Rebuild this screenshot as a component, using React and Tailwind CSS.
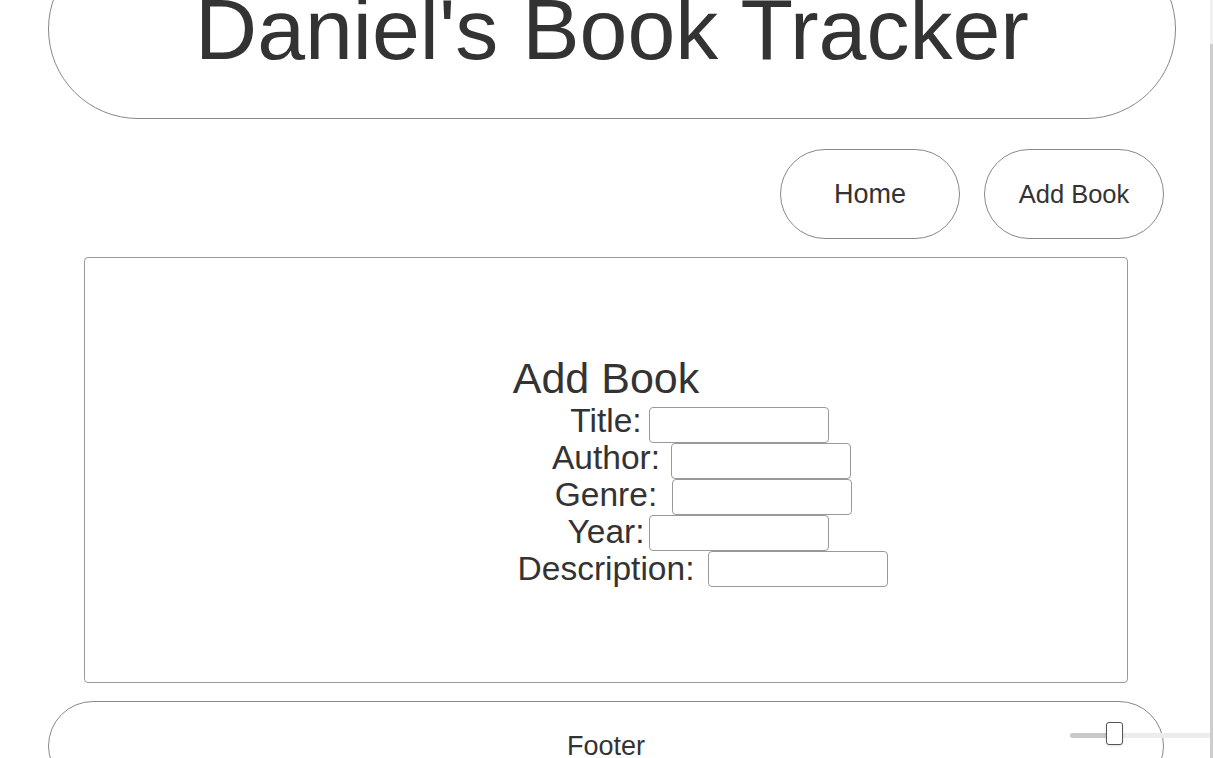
import React from "react";

export default function App() {
  const fields = [
    { label: "Title:", gap: "ml-[7px]", shift: "mt-[1px]" },
    { label: "Author:", gap: "ml-[11px]", shift: "mt-[2px]" },
    { label: "Genre:", gap: "ml-[15px]", shift: "mt-[3px]" },
    { label: "Year:", gap: "ml-[4px]", shift: "mt-[4px]" },
    { label: "Description:", gap: "ml-[14px]", shift: "mt-[5px]" },
  ];

  return (
    <div className="relative w-full h-[758px] overflow-hidden bg-white text-[#333] font-['Liberation_Sans',Arial,sans-serif]">
      {/* Header */}
      <header className="mt-[-61px] ml-[48px] w-[1128px] h-[180px] rounded-full border border-[#888] flex items-center justify-center">
        <h1 className="text-[86px] leading-none">Daniel's Book Tracker</h1>
      </header>

      {/* Nav */}
      <nav className="mt-[30px] w-[1164px] flex justify-end gap-[24px]">
        <button className="w-[180px] h-[90px] rounded-full border border-[#888] text-[27px] bg-white">
          Home
        </button>
        <button className="w-[180px] h-[90px] rounded-full border border-[#888] text-[25.5px] bg-white">
          Add Book
        </button>
      </nav>

      {/* Main */}
      <main className="mt-[18px] ml-[84px] w-[1044px] h-[426px] rounded border border-[#999] flex flex-col items-center justify-center">
        <h2 className="text-[43px] leading-[46px] mt-[2px] mb-[6px]">Add Book</h2>
        <form className="w-full">
          {fields.map((f) => (
            <div key={f.label} className="grid grid-cols-[1fr_auto_1fr] items-start h-[36px]">
              <div></div>
              <label className={`${f.shift} text-[33.5px] leading-[25px]`}>{f.label}</label>
              <div className="flex">
                <input
                  type="text"
                  className={`${f.gap} w-[180px] h-[36px] rounded border border-[#999] bg-white`}
                />
              </div>
            </div>
          ))}
        </form>
      </main>

      {/* Footer */}
      <footer className="mt-[18px] ml-[48px] w-[1116px] h-[90px] rounded-full border border-[#888] flex items-center justify-center">
        <span className="text-[27px]">Footer</span>
      </footer>

      {/* Slider overlay */}
      <div className="absolute left-[1070px] top-[733px] w-[143px] h-[5px] flex">
        <div className="w-[40px] h-full bg-[#c8c8c8] rounded-l-full"></div>
        <div className="flex-1 h-full bg-[#ececec]"></div>
      </div>
      <div className="absolute left-[1106px] top-[722px] w-[17px] h-[23px] rounded-[3px] border border-[#555] bg-white shadow"></div>

      {/* Scrollbar */}
      <div className="absolute right-0 top-0 w-[3px] h-full bg-[#f1f1f1]">
        <div className="mt-[44px] h-full bg-[#cdcdcd]"></div>
      </div>
    </div>
  );
}
